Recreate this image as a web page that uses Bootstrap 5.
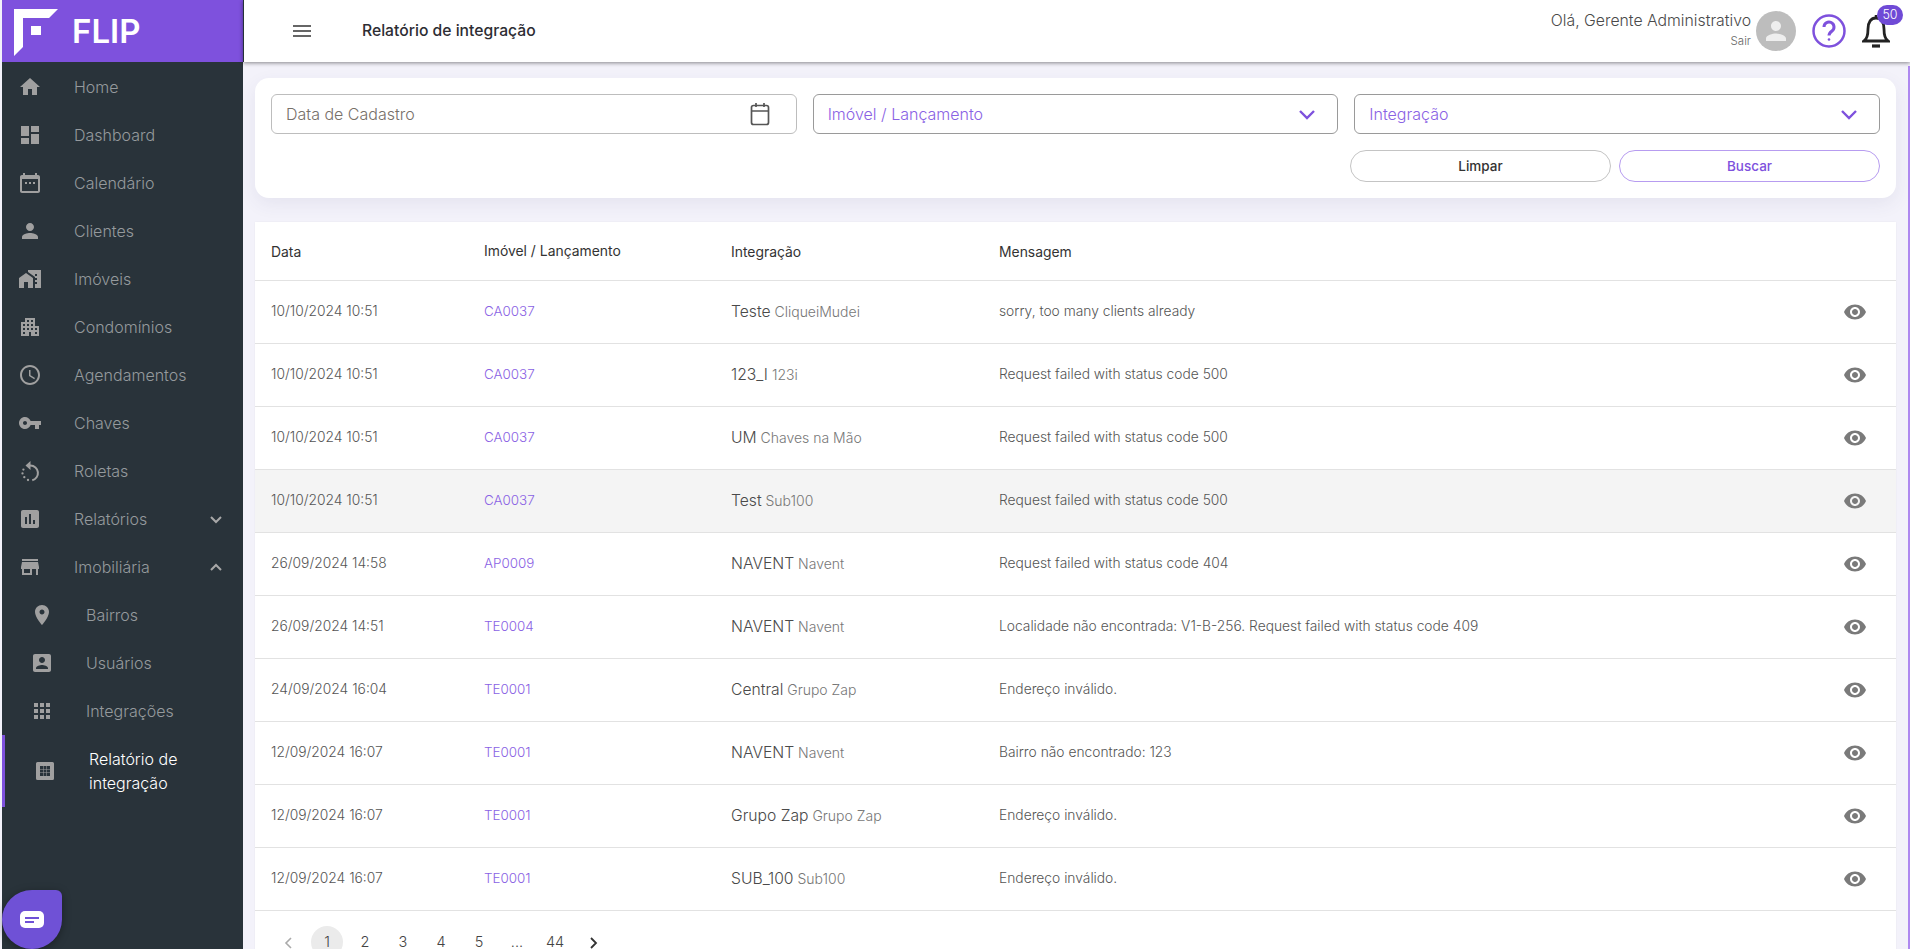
<!DOCTYPE html>
<html lang="pt-BR"><head><meta charset="utf-8"><title>Relatório de integração</title>
<link rel="stylesheet" href="https://cdn.jsdelivr.net/npm/bootstrap@5.3.0/dist/css/bootstrap.min.css">
<style>
html,body{height:100%;overflow:hidden}
body{font-family:Inter,"Liberation Sans",sans-serif;font-weight:300;background:#f3f2fa;color:#444;font-size:13px}
.shell{height:949px}
.side{width:241px;margin-left:2px;background:#29333a;flex:none;position:relative}
.brand{height:62px;background:#7e51dd;padding-left:12px;gap:14px;flex:none}
.brand-name{font-size:33px;font-weight:600;color:#fff;line-height:1}
.sidenav{margin-top:1px}
.mitem{height:48px;padding-left:16px;color:#959a9d;font-size:16px;text-decoration:none}
.mitem svg.ic{width:24px;height:24px;fill:#a0a0a0;flex:none}
.mitem .lbl{margin-left:32px;flex:1}
.mitem .car{width:24px;height:24px;fill:none;stroke:#a8a8a8;stroke-width:2;margin-right:15px}
.sub{padding-left:28px}
.mactive{height:72px;padding-left:28px;border-left:3px solid #7e51dd;color:#fff;line-height:24px}
.chatb{position:absolute;left:0;bottom:0;width:60px;height:59px;background:#6f51d6;border-radius:50% 6px 50% 50%;box-shadow:0 2px 8px rgba(0,0,0,.35)}
.topb{height:62px;background:#fff;box-shadow:0 1px 4px rgba(0,0,0,.45);position:relative;z-index:2;flex:none;border-left:1px solid #263238;padding-left:46px;padding-right:20px}
.pagetitle{font-size:15.7px;font-weight:500;color:#2d2d33;margin-left:48px}
.hello{font-size:15.8px;color:#4a4a4a;line-height:20px;text-align:right}
.sair{font-size:11.5px;color:#666;line-height:20px}
.avat{width:40px;height:40px;border-radius:50%;background:#bdbdbd;margin-left:5px}
.bellwrap{position:relative;margin-left:16px}
.bdg{position:absolute;top:-9px;right:-13px;min-width:26px;height:20px;border-radius:10px;background:#6f4ad6;color:#fff;font-size:12.5px;text-align:center;line-height:20px}
.content{padding:16px 14px 0 12px;flex:1;overflow:hidden;position:relative}
.scrollmark{position:absolute;right:0;top:4px;width:2px;height:100%;background:#ae88f0}
.fcard{background:#fff;border-radius:14px;height:120px;padding:16px 16px 0 16px;box-shadow:0 6px 18px rgba(70,60,120,.08)}
.finput{height:40px;border:1px solid #bdbdbd;border-radius:6px;padding:0 18px 0 14px;font-size:16px;color:#77706a;flex:1 1 0}
.fcalic{margin-right:6px}
.fsel{border-color:#9a9a9a;color:#8a62e4}
.finput svg{flex:none}
.pillb{height:32px;width:261px;border-radius:16px;background:#fff;border:1px solid #c4c4c4;font-size:13.5px;font-weight:500;color:#333;padding:0}
.pillp{border-color:#b79cf0;color:#7e51dd}
.tcard{background:#fff;margin-top:24px;box-shadow:0 0 2px rgba(0,0,0,.05)}
.tbl{table-layout:fixed;width:100%;margin:0}
.tbl th{height:58px;font-weight:400;font-size:13.9px;color:#333;padding:4px 0 0 16px;vertical-align:middle;border-bottom:1px solid #e2e2e2}
.tbl th.thup{padding-bottom:3px}
.tbl td{height:63px;padding:0 0 0 16px;vertical-align:middle;font-size:13.8px;color:#555;border-bottom:1px solid #e2e2e2;background:transparent}
.tbl tr.hov td{background:#f4f4f4}
.tbl a{color:#8a62e4;text-decoration:none;font-size:13.4px}
.intn{font-size:15.7px;color:#4a4a4a}
.ints{font-size:14px;color:#777}
.eye{width:24px;height:24px;fill:#7a7a7a;display:block;margin-left:auto;margin-right:29px}
.pgs{height:60px;padding-left:15px;gap:0;list-style:none;margin:0;align-items:flex-start;padding-top:15px}
.pgs li{width:38px;height:32px;line-height:32px;text-align:center;font-size:14.5px;color:#444}
.pgs li span{display:inline-block;width:32px;height:32px;border-radius:50%}
.pgs li.cur span{background:#ebebeb}
</style></head><body>
<svg width="0" height="0" class="d-none"><defs>
<symbol id="i-eye" viewBox="0 0 24 24"><path d="M12 4.500C7 4.500 2.730 7.610 1 12c1.730 4.390 6 7.500 11 7.500s9.270-3.110 11-7.500c-1.730-4.390-6-7.500-11-7.500zM12 17c-2.760 0-5-2.240-5-5s2.240-5 5-5 5 2.240 5 5-2.240 5-5 5zm0-8c-1.660 0-3 1.340-3 3s1.340 3 3 3 3-1.340 3-3-1.340-3-3-3z"/></symbol>
</defs></svg>
<div class="d-flex shell">
<aside class="side d-flex flex-column">
  <div class="brand d-flex align-items-center">
    <svg width="44" height="50" viewBox="0 0 44 50"><path d="M0 3H44L35 12H9V41L0 50Z M17 20H27V29H17Z" fill="#fff" fill-rule="evenodd"/></svg>
    <span class="brand-name">FLIP</span>
  </div>
  <nav class="sidenav d-flex flex-column">
    <a class="mitem d-flex align-items-center"><svg class="ic" viewBox="0 0 24 24"><path d="M10 20v-6h4v6h5v-8h3L12 3 2 12h3v8z"/></svg><span class="lbl">Home</span></a>
    <a class="mitem d-flex align-items-center"><svg class="ic" viewBox="0 0 24 24"><path d="M3 13h8V3H3v10zm0 8h8v-6H3v6zm10 0h8V11h-8v10zm0-18v6h8V3h-8z"/></svg><span class="lbl">Dashboard</span></a>
    <a class="mitem d-flex align-items-center"><svg class="ic" viewBox="0 0 24 24"><path d="M20 4h-1V2h-2v2H7V2H5v2H4c-1.100 0-2 .9-2 2v14c0 1.100.9 2 2 2h16c1.100 0 2-.9 2-2V6c0-1.100-.9-2-2-2zm0 16H4V8h16v12zM7 11h2v2H7zm4 0h2v2h-2zm4 0h2v2h-2z"/></svg><span class="lbl">Calendário</span></a>
    <a class="mitem d-flex align-items-center"><svg class="ic" viewBox="0 0 24 24"><path d="M12 12c2.210 0 4-1.790 4-4s-1.790-4-4-4-4 1.790-4 4 1.790 4 4 4zm0 2c-2.670 0-8 1.340-8 4v2h16v-2c0-2.660-5.330-4-8-4z"/></svg><span class="lbl">Clientes</span></a>
    <a class="mitem d-flex align-items-center"><svg class="ic" viewBox="0 0 24 24"><path d="M1 11v10h5v-6h4v6h5V11L8 6z M10 3v1.970l7 5V11h2v2h-2v2h2v2h-2v4h6V3H10zm9 6h-2V7h2v2z"/></svg><span class="lbl">Imóveis</span></a>
    <a class="mitem d-flex align-items-center"><svg class="ic" viewBox="0 0 24 24"><path d="M17 11V3H7v4H3v14h8v-4h2v4h8V11h-4zM7 19H5v-2h2v2zm0-4H5v-2h2v2zm0-4H5V9h2v2zm4 4H9v-2h2v2zm0-4H9V9h2v2zm0-4H9V5h2v2zm4 8h-2v-2h2v2zm0-4h-2V9h2v2zm0-4h-2V5h2v2zm4 12h-2v-2h2v2zm0-4h-2v-2h2v2z"/></svg><span class="lbl">Condomínios</span></a>
    <a class="mitem d-flex align-items-center"><svg class="ic" viewBox="0 0 24 24"><path d="M11.990 2C6.470 2 2 6.480 2 12s4.470 10 9.990 10C17.520 22 22 17.520 22 12S17.520 2 11.990 2zM12 20c-4.420 0-8-3.580-8-8s3.580-8 8-8 8 3.580 8 8-3.580 8-8 8zm.5-13H11v6l5.250 3.150.75-1.230-4.500-2.670z"/></svg><span class="lbl">Agendamentos</span></a>
    <a class="mitem d-flex align-items-center"><svg class="ic" viewBox="0 0 24 24"><path d="M12.650 10C11.830 7.670 9.610 6 7 6c-3.310 0-6 2.690-6 6s2.690 6 6 6c2.610 0 4.830-1.670 5.650-4H17v4h4v-4h2v-4H12.650zM7 14c-1.100 0-2-.9-2-2s.9-2 2-2 2 .9 2 2-.9 2-2 2z"/></svg><span class="lbl">Chaves</span></a>
    <a class="mitem d-flex align-items-center"><svg class="ic" viewBox="0 0 24 24"><path d="M12.500 2l-5 4.500 5 4.500V7.500a6.500 6.500 0 0 1 1.500 12.800l.5 1.950A8.500 8.500 0 0 0 12.500 5.500z"/><circle cx="5.400" cy="10.600" r="1.150"/><circle cx="4.500" cy="14.400" r="1.150"/><circle cx="6.300" cy="18.200" r="1.150"/><circle cx="10" cy="21" r="1.150"/></svg><span class="lbl">Roletas</span></a>
    <a class="mitem d-flex align-items-center"><svg class="ic" viewBox="0 0 24 24"><path d="M19 3H5c-1.100 0-2 .9-2 2v14c0 1.100.9 2 2 2h14c1.100 0 2-.9 2-2V5c0-1.100-.9-2-2-2zM9 17H7v-7h2v7zm4 0h-2V7h2v10zm4 0h-2v-4h2v4z"/></svg><span class="lbl">Relatórios</span><svg class="car" viewBox="0 0 24 24"><path d="M7 10l5 5 5-5"/></svg></a>
    <a class="mitem d-flex align-items-center"><svg class="ic" viewBox="0 0 24 24"><path d="M20 4H4v2h16V4zm1 10v-2l-1-5H4l-1 5v2h1v6h10v-6h4v6h2v-6h1zm-9 4H6v-4h6v4z"/></svg><span class="lbl">Imobiliária</span><svg class="car" viewBox="0 0 24 24"><path d="M7 15l5-5 5 5"/></svg></a>
    <a class="mitem sub d-flex align-items-center"><svg class="ic" viewBox="0 0 24 24"><path d="M12 2C8.130 2 5 5.130 5 9c0 5.250 7 13 7 13s7-7.750 7-13c0-3.870-3.130-7-7-7zm0 9.500c-1.380 0-2.500-1.120-2.500-2.500s1.120-2.500 2.500-2.500 2.500 1.120 2.500 2.500-1.120 2.500-2.500 2.500z"/></svg><span class="lbl">Bairros</span></a>
    <a class="mitem sub d-flex align-items-center"><svg class="ic" viewBox="0 0 24 24"><path d="M3 5v14c0 1.100.89 2 2 2h14c1.100 0 2-.9 2-2V5c0-1.100-.9-2-2-2H5c-1.110 0-2 .9-2 2zm12 4c0 1.660-1.340 3-3 3s-3-1.340-3-3 1.340-3 3-3 3 1.340 3 3zm-9 8c0-2 4-3.100 6-3.100s6 1.100 6 3.100v1H6v-1z"/></svg><span class="lbl">Usuários</span></a>
    <a class="mitem sub d-flex align-items-center"><svg class="ic" viewBox="0 0 24 24"><path d="M4 8h4V4H4v4zm6 12h4v-4h-4v4zm-6 0h4v-4H4v4zm0-6h4v-4H4v4zm6 0h4v-4h-4v4zm6-10v4h4V4h-4zm-6 4h4V4h-4v4zm6 6h4v-4h-4v4zm0 6h4v-4h-4v4z"/></svg><span class="lbl">Integrações</span></a>
    <a class="mitem mactive d-flex align-items-center"><svg class="ic" viewBox="0 0 24 24"><path fill-rule="evenodd" d="M4.500 3h15A1.500 1.500 0 0 1 21 4.500v15a1.500 1.500 0 0 1-1.500 1.500h-15A1.500 1.500 0 0 1 3 19.500v-15A1.500 1.500 0 0 1 4.500 3zM7 7v3h3V7zm3.500 0v3h3V7zM14 7v3h3V7zM7 10.500v3h3v-3zm3.500 0v3h3v-3zm3.500 0v3h3v-3zM7 14v3h3v-3zm3.500 0v3h3v-3zm3.500 0v3h3v-3z"/></svg><span class="lbl">Relatório de integração</span></a>
  </nav>
  <div class="chatb d-flex align-items-center justify-content-center"><svg width="24" height="18" viewBox="0 0 24 18"><rect width="24" height="17" rx="5" fill="#fff"/><path d="M5 7h14M5 11h9" stroke="#6f51d6" stroke-width="2"/></svg></div>
</aside>
<div class="flex-grow-1 d-flex flex-column" style="min-width:0">
  <header class="topb d-flex align-items-center">
    <svg width="24" height="24" viewBox="0 0 24 24" fill="#666"><path d="M3 18h18v-2H3v2zm0-5h18v-2H3v2zm0-7v2h18V6H3z"/></svg>
    <span class="pagetitle">Relatório de integração</span>
    <div class="ms-auto d-flex align-items-center">
      <div class="hello">Olá, Gerente Administrativo<div class="sair">Sair</div></div>
      <div class="avat d-flex align-items-center justify-content-center"><svg width="30" height="30" viewBox="0 0 24 24" fill="#eee"><path d="M12 12c2.210 0 4-1.790 4-4s-1.790-4-4-4-4 1.790-4 4 1.790 4 4 4zm0 2c-2.670 0-8 1.340-8 4v2h16v-2c0-2.660-5.330-4-8-4z"/></svg></div>
      <svg class="ms-3" width="34" height="34" viewBox="0 0 34 34" fill="none" stroke="#7e51dd" stroke-width="2.500"><circle cx="17" cy="17" r="15.500"/><path d="M12 13a5 5 0 1 1 8 4c-2 1.500-3 2.500-3 4.500" stroke-width="3"/><circle cx="17" cy="25.500" r="1.300" fill="#7e51dd" stroke="none"/></svg>
      <div class="bellwrap"><svg class="d-block" width="28" height="34" viewBox="0 0 28 34" fill="none" stroke="#222" stroke-width="2.800"><path d="M2 27c3-2 4-6 4-12 0-7 3-11 8-11s8 4 8 11c0 6 1 10 4 12z"/><path d="M14 4V1" stroke-width="2.500"/><path d="M10 32h8" stroke-width="3.200"/></svg><span class="bdg">50</span></div>
    </div>
  </header>
  <main class="content">
    <div class="scrollmark"></div>
    <section class="fcard">
      <div class="d-flex gap-3">
        <div class="finput d-flex align-items-center justify-content-between">Data de Cadastro<svg class="fcalic" width="24" height="26" viewBox="0 0 24 26" fill="none" stroke="#555" stroke-width="1.700"><rect x="3.500" y="4.500" width="17" height="19" rx="2"/><path d="M3.500 10h17M8 2v4M16 2v4"/></svg></div>
        <div class="finput fsel d-flex align-items-center justify-content-between">Imóvel / Lançamento<svg width="24" height="24" viewBox="0 0 24 24" fill="none" stroke="#7e51dd" stroke-width="2.400"><path d="M5 9l7 7 7-7"/></svg></div>
        <div class="finput fsel d-flex align-items-center justify-content-between">Integração<svg width="24" height="24" viewBox="0 0 24 24" fill="none" stroke="#7e51dd" stroke-width="2.400"><path d="M5 9l7 7 7-7"/></svg></div>
      </div>
      <div class="d-flex justify-content-end gap-2 mt-3"><button class="btn pillb">Limpar</button><button class="btn pillb pillp">Buscar</button></div>
    </section>
    <section class="tcard">
      <table class="table tbl">
        <colgroup><col style="width:213px"><col style="width:247px"><col style="width:268px"><col><col style="width:80px"></colgroup>
        <thead><tr><th>Data</th><th class="thup">Imóvel / Lançamento</th><th>Integração</th><th>Mensagem</th><th></th></tr></thead>
        <tbody>
          <tr><td>10/10/2024 10:51</td><td><a href="#">CA0037</a></td><td><span class="intn">Teste</span> <span class="ints">CliqueiMudei</span></td><td>sorry, too many clients already</td><td><svg class="eye"><use href="#i-eye"/></svg></td></tr>
          <tr><td>10/10/2024 10:51</td><td><a href="#">CA0037</a></td><td><span class="intn">123_I</span> <span class="ints">123i</span></td><td>Request failed with status code 500</td><td><svg class="eye"><use href="#i-eye"/></svg></td></tr>
          <tr><td>10/10/2024 10:51</td><td><a href="#">CA0037</a></td><td><span class="intn">UM</span> <span class="ints">Chaves na Mão</span></td><td>Request failed with status code 500</td><td><svg class="eye"><use href="#i-eye"/></svg></td></tr>
          <tr class="hov"><td>10/10/2024 10:51</td><td><a href="#">CA0037</a></td><td><span class="intn">Test</span> <span class="ints">Sub100</span></td><td>Request failed with status code 500</td><td><svg class="eye"><use href="#i-eye"/></svg></td></tr>
          <tr><td>26/09/2024 14:58</td><td><a href="#">AP0009</a></td><td><span class="intn">NAVENT</span> <span class="ints">Navent</span></td><td>Request failed with status code 404</td><td><svg class="eye"><use href="#i-eye"/></svg></td></tr>
          <tr><td>26/09/2024 14:51</td><td><a href="#">TE0004</a></td><td><span class="intn">NAVENT</span> <span class="ints">Navent</span></td><td>Localidade não encontrada: V1-B-256. Request failed with status code 409</td><td><svg class="eye"><use href="#i-eye"/></svg></td></tr>
          <tr><td>24/09/2024 16:04</td><td><a href="#">TE0001</a></td><td><span class="intn">Central</span> <span class="ints">Grupo Zap</span></td><td>Endereço inválido.</td><td><svg class="eye"><use href="#i-eye"/></svg></td></tr>
          <tr><td>12/09/2024 16:07</td><td><a href="#">TE0001</a></td><td><span class="intn">NAVENT</span> <span class="ints">Navent</span></td><td>Bairro não encontrado: 123</td><td><svg class="eye"><use href="#i-eye"/></svg></td></tr>
          <tr><td>12/09/2024 16:07</td><td><a href="#">TE0001</a></td><td><span class="intn">Grupo Zap</span> <span class="ints">Grupo Zap</span></td><td>Endereço inválido.</td><td><svg class="eye"><use href="#i-eye"/></svg></td></tr>
          <tr><td>12/09/2024 16:07</td><td><a href="#">TE0001</a></td><td><span class="intn">SUB_100</span> <span class="ints">Sub100</span></td><td>Endereço inválido.</td><td><svg class="eye"><use href="#i-eye"/></svg></td></tr>
        </tbody>
      </table>
      <ul class="pgs d-flex">
        <li><svg width="12" height="12" viewBox="0 0 12 12" fill="none" stroke="#aaa" stroke-width="1.600"><path d="M8 1L3 6l5 5"/></svg></li>
        <li class="cur"><span>1</span></li><li>2</li><li>3</li><li>4</li><li>5</li><li>...</li><li>44</li>
        <li><svg width="12" height="12" viewBox="0 0 12 12" fill="none" stroke="#333" stroke-width="1.800"><path d="M4 1l5 5-5 5"/></svg></li>
      </ul>
    </section>
  </main>
</div>
</div>
</body></html>
